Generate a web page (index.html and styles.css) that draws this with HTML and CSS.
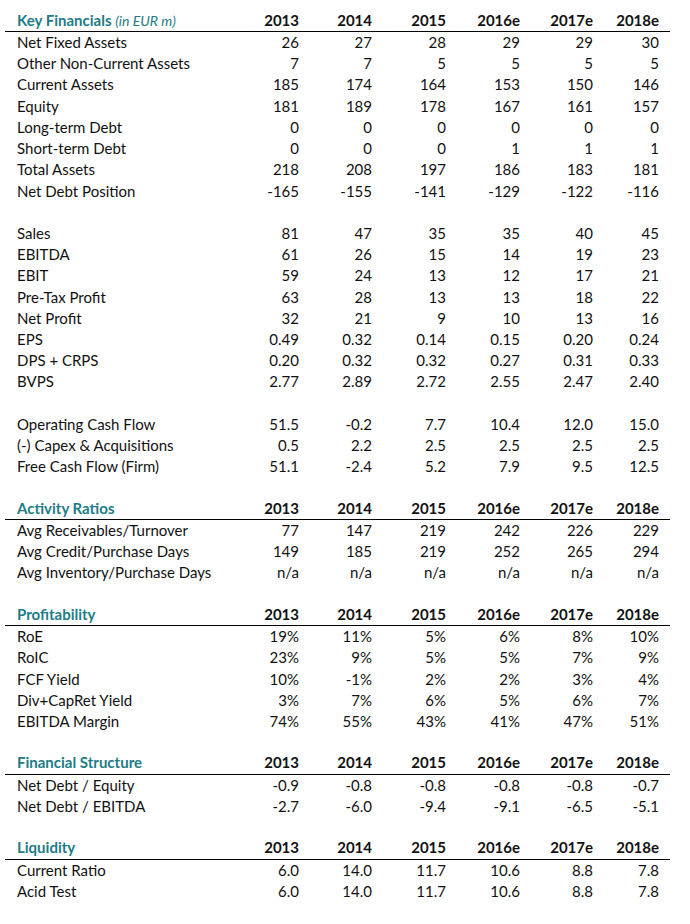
FILE: index.html
```html
<!DOCTYPE html>
<html>
<head>
<meta charset="utf-8">
<link rel="stylesheet" href="styles.css">
</head>
<body>
<div class="sheet">
  <section class="block">
    <div class="row head"><div class="lbl">Key Financials <span class="unit">(in EUR m)</span></div><div>2013</div><div>2014</div><div>2015</div><div>2016e</div><div>2017e</div><div>2018e</div></div>
    <div class="row"><div class="lbl">Net Fixed Assets</div><div>26</div><div>27</div><div>28</div><div>29</div><div>29</div><div>30</div></div>
    <div class="row"><div class="lbl">Other Non-Current Assets</div><div>7</div><div>7</div><div>5</div><div>5</div><div>5</div><div>5</div></div>
    <div class="row"><div class="lbl">Current Assets</div><div>185</div><div>174</div><div>164</div><div>153</div><div>150</div><div>146</div></div>
    <div class="row"><div class="lbl">Equity</div><div>181</div><div>189</div><div>178</div><div>167</div><div>161</div><div>157</div></div>
    <div class="row"><div class="lbl">Long-term Debt</div><div>0</div><div>0</div><div>0</div><div>0</div><div>0</div><div>0</div></div>
    <div class="row"><div class="lbl">Short-term Debt</div><div>0</div><div>0</div><div>0</div><div>1</div><div>1</div><div>1</div></div>
    <div class="row"><div class="lbl">Total Assets</div><div>218</div><div>208</div><div>197</div><div>186</div><div>183</div><div>181</div></div>
    <div class="row"><div class="lbl">Net Debt Position</div><div>-165</div><div>-155</div><div>-141</div><div>-129</div><div>-122</div><div>-116</div></div>
  </section>
  <section class="block">
    <div class="row"><div class="lbl">Sales</div><div>81</div><div>47</div><div>35</div><div>35</div><div>40</div><div>45</div></div>
    <div class="row"><div class="lbl">EBITDA</div><div>61</div><div>26</div><div>15</div><div>14</div><div>19</div><div>23</div></div>
    <div class="row"><div class="lbl">EBIT</div><div>59</div><div>24</div><div>13</div><div>12</div><div>17</div><div>21</div></div>
    <div class="row"><div class="lbl">Pre-Tax Profit</div><div>63</div><div>28</div><div>13</div><div>13</div><div>18</div><div>22</div></div>
    <div class="row"><div class="lbl">Net Profit</div><div>32</div><div>21</div><div>9</div><div>10</div><div>13</div><div>16</div></div>
    <div class="row"><div class="lbl">EPS</div><div>0.49</div><div>0.32</div><div>0.14</div><div>0.15</div><div>0.20</div><div>0.24</div></div>
    <div class="row"><div class="lbl">DPS + CRPS</div><div>0.20</div><div>0.32</div><div>0.32</div><div>0.27</div><div>0.31</div><div>0.33</div></div>
    <div class="row"><div class="lbl">BVPS</div><div>2.77</div><div>2.89</div><div>2.72</div><div>2.55</div><div>2.47</div><div>2.40</div></div>
  </section>
  <section class="block">
    <div class="row"><div class="lbl">Operating Cash Flow</div><div>51.5</div><div>-0.2</div><div>7.7</div><div>10.4</div><div>12.0</div><div>15.0</div></div>
    <div class="row"><div class="lbl">(-) Capex &amp; Acquisitions</div><div>0.5</div><div>2.2</div><div>2.5</div><div>2.5</div><div>2.5</div><div>2.5</div></div>
    <div class="row"><div class="lbl">Free Cash Flow (Firm)</div><div>51.1</div><div>-2.4</div><div>5.2</div><div>7.9</div><div>9.5</div><div>12.5</div></div>
  </section>
  <section class="block">
    <div class="row head"><div class="lbl">Activity Ratios</div><div>2013</div><div>2014</div><div>2015</div><div>2016e</div><div>2017e</div><div>2018e</div></div>
    <div class="row"><div class="lbl">Avg Receivables/Turnover</div><div>77</div><div>147</div><div>219</div><div>242</div><div>226</div><div>229</div></div>
    <div class="row"><div class="lbl">Avg Credit/Purchase Days</div><div>149</div><div>185</div><div>219</div><div>252</div><div>265</div><div>294</div></div>
    <div class="row"><div class="lbl">Avg Inventory/Purchase Days</div><div>n/a</div><div>n/a</div><div>n/a</div><div>n/a</div><div>n/a</div><div>n/a</div></div>
  </section>
  <section class="block">
    <div class="row head"><div class="lbl">Profitability</div><div>2013</div><div>2014</div><div>2015</div><div>2016e</div><div>2017e</div><div>2018e</div></div>
    <div class="row"><div class="lbl">RoE</div><div>19%</div><div>11%</div><div>5%</div><div>6%</div><div>8%</div><div>10%</div></div>
    <div class="row"><div class="lbl">RoIC</div><div>23%</div><div>9%</div><div>5%</div><div>5%</div><div>7%</div><div>9%</div></div>
    <div class="row"><div class="lbl">FCF Yield</div><div>10%</div><div>-1%</div><div>2%</div><div>2%</div><div>3%</div><div>4%</div></div>
    <div class="row"><div class="lbl">Div+CapRet Yield</div><div>3%</div><div>7%</div><div>6%</div><div>5%</div><div>6%</div><div>7%</div></div>
    <div class="row"><div class="lbl">EBITDA Margin</div><div>74%</div><div>55%</div><div>43%</div><div>41%</div><div>47%</div><div>51%</div></div>
  </section>
  <section class="block">
    <div class="row head"><div class="lbl">Financial Structure</div><div>2013</div><div>2014</div><div>2015</div><div>2016e</div><div>2017e</div><div>2018e</div></div>
    <div class="row"><div class="lbl">Net Debt / Equity</div><div>-0.9</div><div>-0.8</div><div>-0.8</div><div>-0.8</div><div>-0.8</div><div>-0.7</div></div>
    <div class="row"><div class="lbl">Net Debt / EBITDA</div><div>-2.7</div><div>-6.0</div><div>-9.4</div><div>-9.1</div><div>-6.5</div><div>-5.1</div></div>
  </section>
  <section class="block">
    <div class="row head"><div class="lbl">Liquidity</div><div>2013</div><div>2014</div><div>2015</div><div>2016e</div><div>2017e</div><div>2018e</div></div>
    <div class="row"><div class="lbl">Current Ratio</div><div>6.0</div><div>14.0</div><div>11.7</div><div>10.6</div><div>8.8</div><div>7.8</div></div>
    <div class="row"><div class="lbl">Acid Test</div><div>6.0</div><div>14.0</div><div>11.7</div><div>10.6</div><div>8.8</div><div>7.8</div></div>
  </section>
</div>
</body>
</html>
```

FILE: styles.css
```css
html, body {
  margin: 0;
  padding: 0;
  background: #fff;
}
.sheet {
  padding: 10.78px 0 0 5px;
  width: 665px;
  font-family: Lato, "Open Sans", sans-serif;
  font-size: 15px;
  color: #111;
}
.block {
  margin-bottom: 21.22px;
}
.row {
  display: grid;
  grid-template-columns: 231px 75px 73px 74px 74px 73px 65px;
  height: 21.22px;
  line-height: 21.22px;
  white-space: nowrap;
}
.row > div {
  text-align: right;
  padding-right: 12px;
}
.row > div:last-child {
  padding-right: 11px;
}
.row > .lbl {
  text-align: left;
  padding: 0 0 0 12px;
}
.head {
  font-weight: bold;
  height: 20.22px;
  line-height: 19px;
  border-bottom: 1px solid #000;
}
.head > .lbl {
  color: #1d7c86;
}
.unit {
  font-style: italic;
  font-weight: normal;
  font-size: 14px;
}
```
